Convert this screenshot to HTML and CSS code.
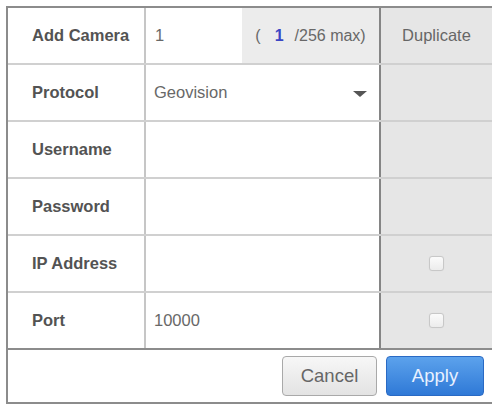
FILE: index.html
```html
<!DOCTYPE html>
<html lang="en">
<head>
  <meta charset="UTF-8" />
  <meta name="viewport" content="width=device-width, initial-scale=1.0" />
  <title>Add Camera</title>
  <link rel="stylesheet" href="styles.css">
</head>
<body>
  <div class="dialog">
    <div class="row">
      <div class="label">Add Camera</div>
      <div class="field field-count">
        <span class="count-input">1</span>
        <span class="count-max">(<b class="count-num">1</b>/256 max)</span>
      </div>
      <div class="extra extra-head">Duplicate</div>
    </div>

    <div class="row">
      <div class="label">Protocol</div>
      <div class="field field-select">
        <span>Geovision</span>
        <span class="arrow"></span>
      </div>
      <div class="extra"></div>
    </div>

    <div class="row">
      <div class="label">Username</div>
      <div class="field"></div>
      <div class="extra"></div>
    </div>

    <div class="row">
      <div class="label">Password</div>
      <div class="field"></div>
      <div class="extra"></div>
    </div>

    <div class="row">
      <div class="label">IP Address</div>
      <div class="field"></div>
      <div class="extra"><span class="check"></span></div>
    </div>

    <div class="row">
      <div class="label">Port</div>
      <div class="field">10000</div>
      <div class="extra"><span class="check"></span></div>
    </div>

    <div class="footer">
      <button class="btn btn-cancel">Cancel</button>
      <button class="btn btn-apply">Apply</button>
    </div>
  </div>
</body>
</html>
```

FILE: styles.css
```css
body {
  margin: 0;
  padding: 0;
  background-color: white;
  font-family: 'Liberation Sans', Arial, sans-serif;
  overflow: hidden;
}

.dialog {
  margin: 6px 0 0 6px;
  border: 2px solid #8c8c8c;
  border-right: none;
}

.row {
  display: grid;
  grid-template-columns: 138px 235px 1fr;
  height: 55px;
}

.row + .row {
  border-top: 2px solid #d0d0d0;
}

.label {
  box-sizing: border-box;
  border-right: 2px solid #c6c6c6;
  padding-left: 24px;
  display: flex;
  align-items: center;
  font-size: 16.5px;
  font-weight: bold;
  color: #535353;
}

.field {
  box-sizing: border-box;
  border-right: 2px solid #858585;
  padding: 0 12px 0 8px;
  display: flex;
  align-items: center;
  font-size: 16.5px;
  color: #686868;
}

.field-count {
  padding: 0;
}

.count-input {
  flex: 1;
  padding-left: 9px;
}

.count-max {
  width: 137px;
  height: 100%;
  background-color: #ececec;
  display: flex;
  align-items: center;
  justify-content: center;
  font-size: 16px;
}

.count-num {
  color: #3b46c4;
  margin: 0 11px 0 14px;
}

.field-select {
  justify-content: space-between;
}

.arrow {
  width: 0;
  height: 0;
  border-left: 7px solid transparent;
  border-right: 7px solid transparent;
  border-top: 6px solid #555;
  margin-top: 2px;
}

.extra {
  background-color: #e6e6e6;
  display: flex;
  align-items: center;
  justify-content: center;
  font-size: 16.5px;
  color: #666;
}

.check {
  width: 13px;
  height: 13px;
  border: 1px solid #c8c8c8;
  border-radius: 3px;
  background: linear-gradient(#fbfbfb, #ececec);
  box-shadow: 0 0 1px rgba(0, 0, 0, 0.08);
}

.footer {
  border-top: 2px solid #8c8c8c;
  height: 52px;
  display: flex;
  justify-content: flex-end;
  align-items: center;
  gap: 9px;
  padding-right: 8px;
}

.btn {
  height: 40px;
  border-radius: 4px;
  font-family: 'Liberation Sans', Arial, sans-serif;
  font-size: 18.5px;
  cursor: pointer;
}

.btn-cancel {
  width: 95px;
  border: 1px solid #a9a9a9;
  background: linear-gradient(#f7f7f7, #e3e3e3);
  color: #666;
}

.btn-apply {
  width: 98px;
  border: 1px solid #2a6ac4;
  background: linear-gradient(#5ca2ec, #2f79d7);
  color: #e8f1ff;
}
```
